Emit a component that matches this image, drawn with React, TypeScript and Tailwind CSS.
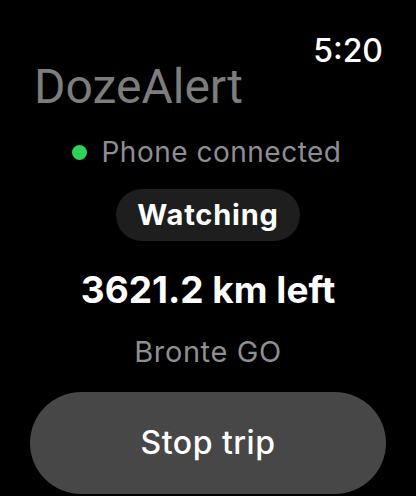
export default function App() {
    return (
        <div className="w-[416px] h-[496px] bg-black overflow-hidden flex flex-col font-['Inter',sans-serif]">
            <div className="pt-[35px] pr-[33px] flex justify-end">
                <span className="text-[32px] leading-[32px] font-medium text-white">5:20</span>
            </div>
            <h1 className="mt-[2px] pl-[34px] text-[48px] leading-[36px] font-normal text-[#7d7d7d] font-['Roboto',sans-serif]">
                DozeAlert
            </h1>
            <div className="mt-[33px] flex items-center justify-center gap-[14px] pr-[2px]">
                <span className="w-[15px] h-[15px] rounded-full bg-[#30d158]" />
                <span className="text-[28px] leading-[28px] tracking-[0.5px] text-[#8e8e93]">Phone connected</span>
            </div>
            <div className="mt-[23px] flex justify-center">
                <div className="h-[52px] px-[21px] rounded-full bg-[#1e1e1e] flex items-center">
                    <span className="text-[29px] leading-[52px] tracking-[0.8px] font-bold text-white">Watching</span>
                </div>
            </div>
            <p className="mt-[30px] text-center text-[37px] leading-[37px] font-bold text-white">3621.2 km left</p>
            <p className="mt-[29px] text-center text-[29px] leading-[29px] tracking-[0.6px] text-[#8e8e93]">Bronte GO</p>
            <div className="mt-[26px] mx-[30px] h-[102px] rounded-full bg-[#474747] flex items-center justify-center">
                <span className="text-[32px] leading-[32px] tracking-[0.5px] font-medium text-white">Stop trip</span>
            </div>
        </div>
    );
}
